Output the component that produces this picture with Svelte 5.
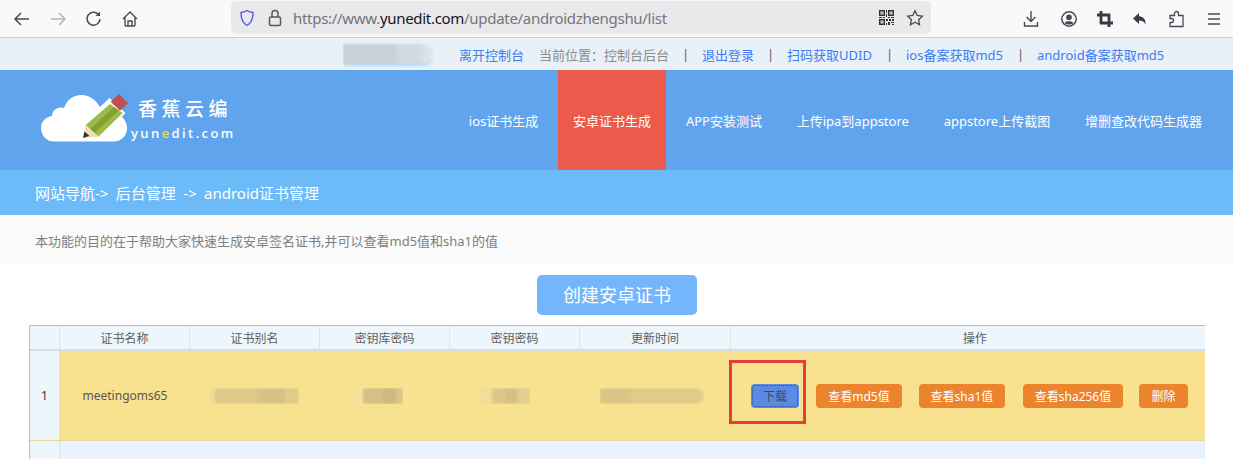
<script>
  const links = [
    { t: '退出登录', w: 52 },
    { t: '扫码获取UDID', w: 86 },
    { t: 'ios备案获取md5', w: 98 },
    { t: 'android备案获取md5', w: 128 }
  ];
  const nav = ['ios证书生成', '安卓证书生成', 'APP安装测试', '上传ipa到appstore', 'appstore上传截图', '增删查改代码生成器'];
  const heads = ['证书名称', '证书别名', '密钥库密码', '密钥密码', '更新时间'];
  const actions = [
    { t: '查看md5值', c: 'a1' },
    { t: '查看sha1值', c: 'a2' },
    { t: '查看sha256值', c: 'a3' },
    { t: '删除', c: 'a4' }
  ];
</script>

<div class="page">
  <div class="chrome">
    <div class="navicons">
      <svg width="18" height="18" viewBox="0 0 18 18" fill="none" stroke="#4a4a50" stroke-width="1.5"><path d="M16 9H2M8 3 2 9l6 6"/></svg>
      <svg width="18" height="18" viewBox="0 0 18 18" fill="none" stroke="#b4b4b8" stroke-width="1.5"><path d="M2 9h14M10 3l6 6-6 6"/></svg>
      <svg width="18" height="18" viewBox="0 0 18 18" fill="none" stroke="#4a4a50" stroke-width="1.5"><path d="M15 9a6.5 6.5 0 1 1-2-5"/><path d="M15 1.5V6h-4.5" fill="#4a4a50" stroke="none"/></svg>
      <svg width="18" height="18" viewBox="0 0 18 18" fill="none" stroke="#4a4a50" stroke-width="1.4"><path d="M2 9 9 2l7 7M4 7.5V15a1 1 0 0 0 1 1h8a1 1 0 0 0 1-1V7.5M7 16v-5h4v5"/></svg>
    </div>
    <div class="urlbar">
      <svg class="shield" width="16" height="18" viewBox="0 0 16 18" fill="none" stroke="#5b5be6" stroke-width="1.4"><path d="M8 1.5c2 1.300 4 1.800 6 2 0 6-1.500 10.500-6 13-4.500-2.500-6-7-6-13 2-.2 4-.7 6-2z"/></svg>
      <svg class="lock" width="14" height="18" viewBox="0 0 14 18" fill="none" stroke="#55555a" stroke-width="1.500"><rect x="1.500" y="8" width="11" height="8.500" rx="1.500"/><path d="M4 8V4.500a3 3 0 0 1 6 0V8"/></svg>
      <div class="url">https://www.<b>yunedit.com</b>/update/androidzhengshu/list</div>
      <svg class="qr" width="15" height="15" viewBox="0 0 15 15" fill="#333"><path fill-rule="evenodd" d="M0 0h6v6H0zM1.500 1.500v3h3v-3zM9 0h6v6H9zM10.500 1.500v3h3v-3zM0 9h6v6H0zM1.500 10.500v3h3v-3z"/><path d="M2.500 2.500h1v1h-1zM11.500 2.500h1v1h-1zM2.500 11.500h1v1h-1zM7 0h1v3H7zM7 4h1v3H7zM0 7h3v1H0zM4 7h2v1H4zM9 7h2v1H9zM12 7h3v1h-3zM7 9h2v2H7zM10 9h2v2h-2zM13 9h2v2h-2zM9 12h2v3H9zM12 12h3v1h-3zM13 14h2v1h-2zM7 13h1v2H7z"/></svg>
      <svg class="star" width="18" height="18" viewBox="0 0 18 18" fill="none" stroke="#4a4a50" stroke-width="1.300"><path d="m9 1.800 2.200 4.700 5.100.7-3.700 3.500.9 5.100L9 13.300l-4.500 2.500.9-5.100-3.700-3.500 5.100-.7z"/></svg>
    </div>
    <div class="tools">
      <svg class="t1" width="16" height="18" viewBox="0 0 16 18" fill="none" stroke="#4a4a50" stroke-width="1.400"><path d="M8 1v10M3.500 7 8 11.500 12.500 7M1.500 12v4h13v-4"/></svg>
      <svg class="t2" width="18" height="18" viewBox="0 0 18 18"><circle cx="9" cy="9" r="7.200" fill="none" stroke="#4a4a50" stroke-width="1.500"/><circle cx="9" cy="7.200" r="2.800" fill="#4a4a50"/><path d="M4.500 13c1.500-2.500 7.500-2.500 9 0-2 2-7 2-9 0z" fill="#4a4a50"/></svg>
      <svg class="t3" width="16" height="16" viewBox="0 0 16 16" fill="none" stroke="#3a3a40" stroke-width="2.800"><path d="M4 0v12h12M0 4h12v12"/></svg>
      <svg class="t4" width="16" height="16" viewBox="0 0 16 16"><path d="M7 2 1 7.500 7 13V9.500c3 0 5 .8 6.500 4 .5-5-2-8-6.500-8.300z" fill="#3a3a40"/></svg>
      <svg class="t5" width="18" height="18" viewBox="0 0 18 18" fill="none" stroke="#4a4a50" stroke-width="1.300"><path d="M2 6h4.500V4a2 2 0 0 1 4 0v2H15v11H2v-4h1.500a2 2 0 0 0 0-4H2z" transform="translate(0 -.5)"/></svg>
      <svg class="t6" width="14" height="12" viewBox="0 0 14 12" stroke="#4a4a50" stroke-width="1.300"><path d="M1 1h12M1 6h12M1 11h12"/></svg>
    </div>
  </div>

  <div class="info">
    <div class="blur user"><i></i></div>
    <a href="#a" class="link">离开控制台</a>
    <span class="pos">当前位置：控制台后台</span>
    {#each links as l}
      <span class="bar">|</span>
      <a href="#a" class="link" style="width:{l.w}px">{l.t}</a>
    {/each}
  </div>

  <header class="head">
    <div class="logo">
      <svg width="90" height="50" viewBox="0 0 90 50">
        <path d="M14 48.500C6 48.500 1 42 1 35c0-7 5-11 11-12 0-6 6-10 12-8 3-8 9-13 17-13 9 0 17 6 20 15 13 0 26 6 26 18 0 8-6 13.500-13 13.500z" fill="#fff"/>
        <path d="M41 47.500 43 30 69.500 5l16 15-25 26z" fill="#fff"/>
        <path d="M70 11 82.700 20 58.300 43.700 45.700 32z" fill="#9dbb4a"/>
        <path d="M74 14 78.500 17.500 54.500 40 50 36z" fill="#7fa233"/>
        <path d="M70.700 8.700 79 1l9 9-8 7.700z" fill="#c0504d"/>
        <path d="M45.700 32 58.300 43.700 43 44.500z" fill="#efe0b0"/>
        <path d="M44.500 38.500 49.500 43 43 45z" fill="#333"/>
      </svg>
      <div class="brand">
        <div class="cn">香蕉云编</div>
        <div class="en">yun<em>e</em>dit.com</div>
      </div>
    </div>
    <nav>
      {#each nav as n, i}
        <a href="#a" class:active={i === 1}>{n}</a>
      {/each}
    </nav>
  </header>

  <div class="crumb">网站导航-&gt; 后台管理 -&gt; android证书管理</div>
  <div class="notice">本功能的目的在于帮助大家快速生成安卓签名证书,并可以查看md5值和sha1的值</div>

  <div class="create"><button>创建安卓证书</button></div>

  <div class="grid">
    <div class="row hrow">
      <div class="c idx"></div>
      {#each heads as h, i}
        <div class="c col" class:last={i === 4}>{h}</div>
      {/each}
      <div class="c ops opshead">操作</div>
    </div>
    <div class="row drow">
      <div class="c idx">1</div>
      <div class="c col">meetingoms65</div>
      <div class="c col"><div class="blur b1"><i></i></div></div>
      <div class="c col"><div class="blur b2"><i></i></div></div>
      <div class="c col"><div class="blur b3"><i></i></div></div>
      <div class="c col last"><div class="blur b4"><i></i></div></div>
      <div class="c ops actions">
        <div class="dlbox">
          <button class="dl">下载</button>
        </div>
        {#each actions as a}
          <button class="act {a.c}">{a.t}</button>
        {/each}
      </div>
    </div>
    <div class="row erow">
      <div class="c idx"></div>
      <div class="fill"></div>
    </div>
  </div>
</div>

<style>
  :global(body) {
    margin: 0;
    background: #fff;
  }
  .page {
    width: 1233px;
    height: 459px;
    overflow: hidden;
    font-family: "Noto Sans", "Noto Sans CJK SC", sans-serif;
    font-size: 13px;
    color: #666;
  }
  .chrome {
    height: 37px;
    display: flex;
    align-items: center;
    background: #f9f9fb;
    border-bottom: 1px solid #cfcfd8;
    padding-left: 13px;
  }
  .navicons {
    display: flex;
    gap: 18px;
    width: 218px;
  }
  .urlbar {
    width: 700px;
    height: 33px;
    margin-top: -2px;
    background: #e9e9ec;
    border-radius: 5px;
    display: flex;
    align-items: center;
    padding-left: 8px;
    box-sizing: border-box;
  }
  .lock {
    margin-left: 13px;
  }
  .url {
    margin-left: 11px;
    flex: 1;
    font-size: 15px;
    letter-spacing: -.02em;
    color: #74747a;
    white-space: nowrap;
  }
  .url b {
    font-weight: 400;
    color: #15141a;
  }
  .qr {
    margin-right: 12px;
  }
  .star {
    margin-right: 7px;
  }
  .tools {
    display: flex;
    align-items: center;
    margin-left: 92px;
  }
  .t2 { margin-left: 21px; }
  .t3 { margin-left: 19px; }
  .t4 { margin-left: 19px; }
  .t5 { margin-left: 20px; }
  .t6 { margin-left: 21px; }

  .info {
    height: 32px;
    background: #e8f0f8;
    display: flex;
    align-items: center;
    padding-left: 343px;
    white-space: nowrap;
  }
  .link {
    color: #3d7cf2;
    text-decoration: none;
    flex: none;
  }
  .pos {
    margin-left: 15px;
    width: 130px;
    color: #8b8b8b;
    flex: none;
  }
  .bar {
    width: 7px;
    margin: 0 13px;
    color: #6b5a4a;
    flex: none;
    text-align: center;
  }
  .blur {
    position: relative;
    overflow: hidden;
    flex: none;
  }
  .blur i {
    display: block;
    height: 100%;
    filter: blur(1px);
  }
  .user {
    width: 92px;
    height: 28px;
    margin-right: 24px;
  }
  .user i {
    width: 90px;
    height: 19px;
    margin-top: 4px;
    border-radius: 0 9px 9px 0;
    background: linear-gradient(90deg, #c8d3d8 0 60%, #cfd9de 60% 80%, #e0e8ee 100%);
    box-shadow: 0 4px 0 -1px #b8daf3;
  }

  .head {
    height: 100px;
    background: #5fa4ec;
    display: flex;
    justify-content: space-between;
    box-sizing: border-box;
    padding-right: 16px;
  }
  .logo {
    display: flex;
    margin-left: 40px;
    padding-top: 23px;
    color: #fff;
  }
  .brand {
    margin-left: 1px;
    padding-top: 3px;
  }
  .cn {
    font-size: 19px;
    line-height: 26px;
    letter-spacing: 4.500px;
    padding-left: 7px;
    font-weight: 500;
  }
  .en {
    font-size: 13px;
    line-height: 20px;
    margin-top: 1px;
    letter-spacing: 2.400px;
    font-weight: 600;
    font-family: "Open Sans", sans-serif;
  }
  .en em {
    font-style: normal;
    color: #e8e43c;
  }
  nav {
    display: flex;
  }
  nav a {
    color: #fff;
    text-decoration: none;
    padding: 0 15px;
    margin-left: 4.800px;
    line-height: 102px;
    height: 100px;
    white-space: nowrap;
  }
  nav a.active {
    background: #ec5a4c;
  }

  .crumb {
    height: 45px;
    line-height: 47px;
    background: #6cbaf8;
    color: #fff;
    font-size: 15px;
    word-spacing: 3.500px;
    padding-left: 35px;
  }
  .notice {
    height: 50px;
    line-height: 52px;
    background: #fafafa;
    color: #808080;
    font-size: 13px;
    padding-left: 35px;
  }
  .create {
    display: flex;
    justify-content: center;
    padding: 10px 0 10px 1px;
  }
  .create button {
    width: 160px;
    height: 40px;
    border: 0;
    border-radius: 5px;
    background: #74b6fb;
    color: #fff;
    font: inherit;
    font-size: 18px;
    line-height: 38px;
    padding: 0;
  }

  .grid {
    margin-left: 29px;
    width: 1176px;
    border-top: 1px solid #a4bfe2;
    border-left: 1px solid #a4bfe2;
    box-sizing: border-box;
    font-size: 12px;
  }
  .row {
    display: flex;
  }
  .c {
    display: flex;
    align-items: center;
    justify-content: center;
    box-sizing: border-box;
    flex: none;
  }
  .idx {
    width: 30px;
    background: #edf6fa;
    border-right: 1px dotted #d2d6da;
    color: #333;
  }
  .col {
    width: 130px;
    border-right: 1px dotted #d2d6da;
  }
  .col.last {
    width: 151px;
  }
  .ops {
    flex: 1;
  }
  .opshead {
    padding-left: 14px;
  }
  .hrow {
    height: 25px;
    background: #edf6fa;
    border-bottom: 2px solid #d6dde2;
    box-sizing: border-box;
    color: #5f5f5f;
  }
  .drow {
    height: 90px;
    background: #f8e290;
    border-bottom: 1px dotted #e0d090;
    box-sizing: border-box;
    color: #555;
  }
  .drow .col {
    border-right: 0;
  }
  .erow {
    height: 20px;
  }
  .fill {
    flex: 1;
    background: #e9f1fe;
  }
  .b1, .b2, .b3, .b4 {
    height: 16px;
  }
  .b1 { width: 90px; margin-left: -3px; }
  .b1 i { background: linear-gradient(90deg, #f0dc94 0 7%, #ddca88 7% 55%, #d6c486 55% 85%, #e0cd8a 85% 100%); }
  .b2 { width: 50px; margin-left: -14px; }
  .b2 i { background: linear-gradient(90deg, #f6e09a 0 20%, #d4c187 20% 60%, #ccba82 60% 85%, #d8c68a 85% 100%); }
  .b3 { width: 50px; margin-left: -20px; }
  .b3 i { background: linear-gradient(90deg, #f2dd96 0 25%, #dbc98c 25% 50%, #d2c088 50% 75%, #e0cf90 75% 100%); }
  .b4 { width: 104px; margin-left: -7px; }
  .b4 i { background: linear-gradient(90deg, #d9c686 0 30%, #e0cc88 30% 100%); border-radius: 0 8px 8px 0; }

  .actions {
    justify-content: flex-start;
    padding-top: 1px;
  }
  .dlbox {
    width: 77px;
    height: 64px;
    box-sizing: border-box;
    border: 3px solid #e53e3a;
    margin-left: -2px;
    padding-left: 19px;
    display: flex;
    align-items: flex-end;
    padding-bottom: 13px;
    margin-bottom: 8px;
    margin-right: 10px;
    flex: none;
  }
  button {
    font-family: inherit;
  }
  .act, .dl {
    height: 24px;
    border: 0;
    border-radius: 4px;
    font-size: 12px;
    padding: 0;
    flex: none;
  }
  .act {
    background: #ec832d;
    color: #fff;
  }
  .dl {
    width: 48px;
    background: #5b8ae2;
    color: #3a4a66;
    outline: 1px dotted #34558f;
    outline-offset: -2px;
  }
  .a1 { width: 86px; }
  .a2 { width: 86px; margin-left: 17px; }
  .a3 { width: 100px; margin-left: 18px; }
  .a4 { width: 49px; margin-left: 16px; }
</style>
